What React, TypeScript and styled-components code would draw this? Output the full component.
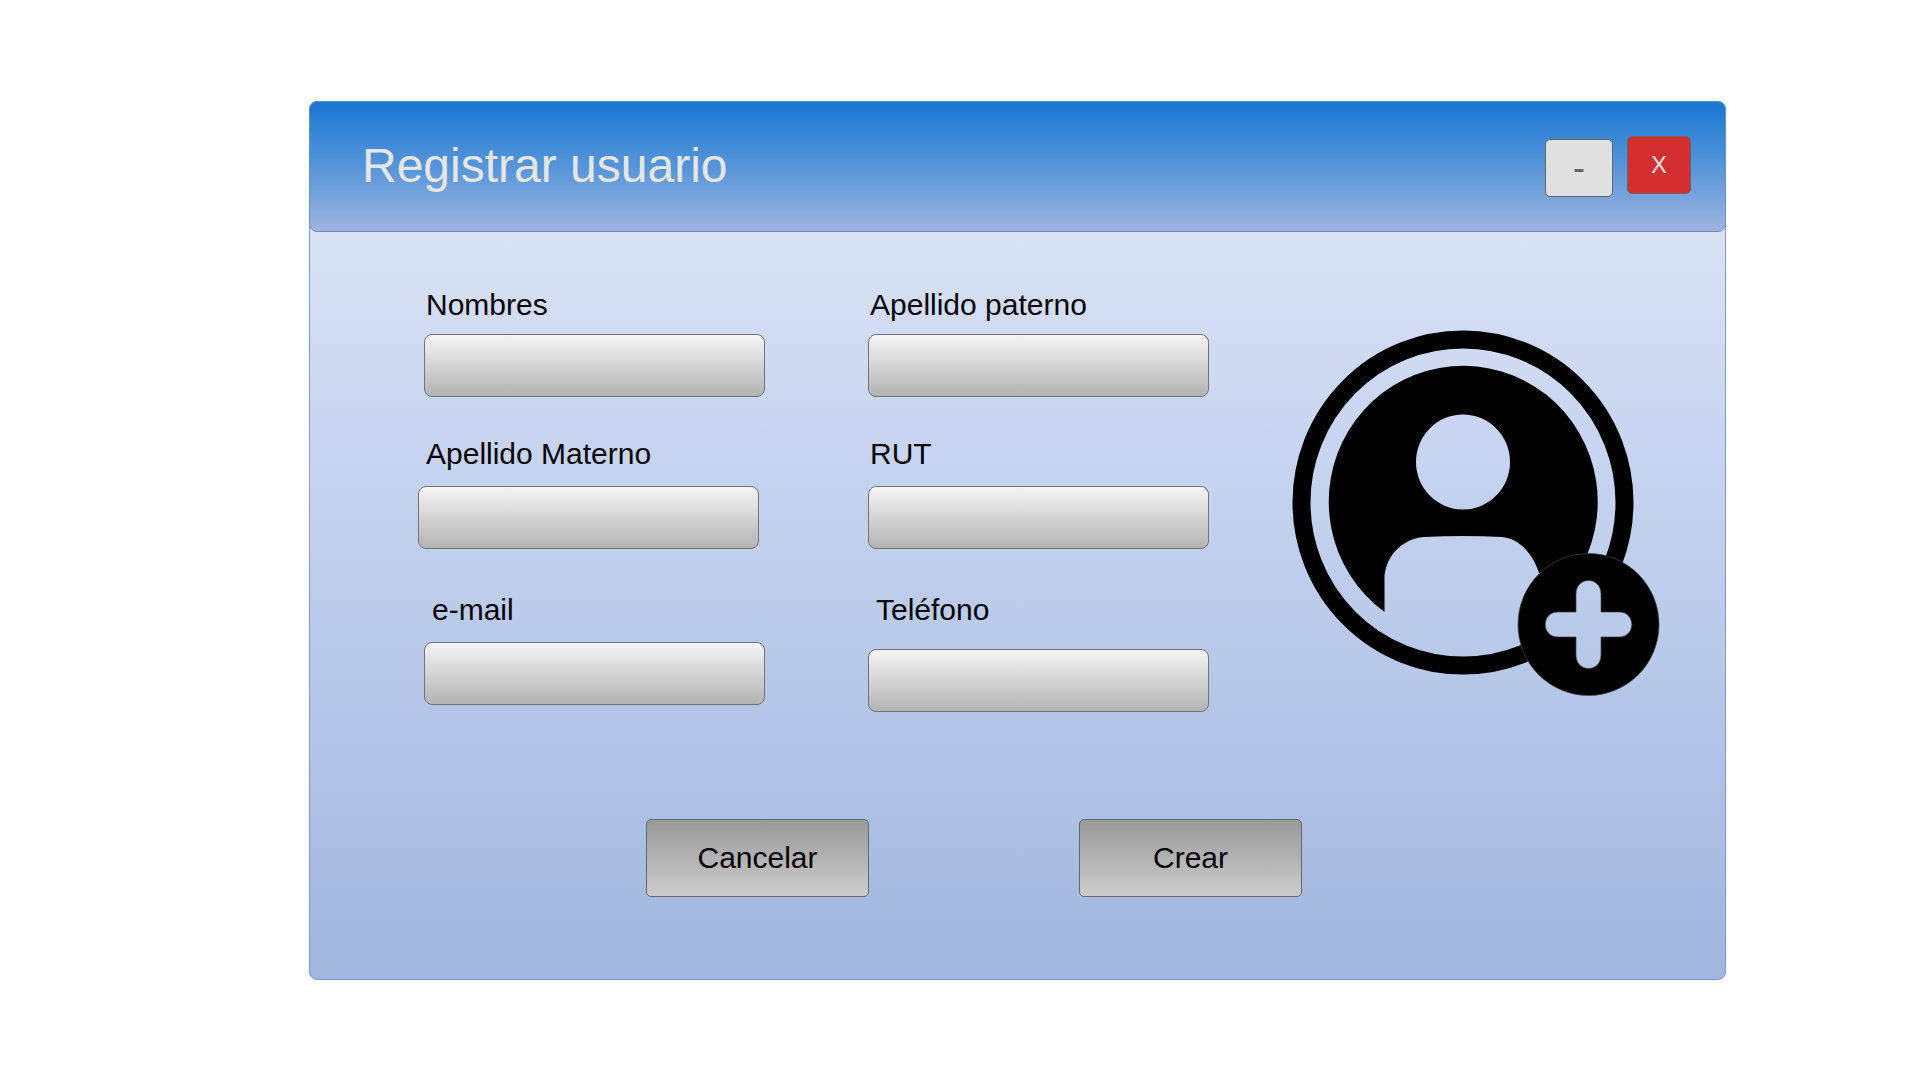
import React, { useId } from 'react';
import styled, { createGlobalStyle } from 'styled-components';

const GlobalStyle = createGlobalStyle`
  *, *::before, *::after { box-sizing: border-box; }
  body {
    margin: 0;
    background: #fff;
    font-family: 'Liberation Sans', Arial, Helvetica, sans-serif;
    color: #000;
  }
`;

const Page = styled.main`
  min-height: 100vh;
  padding: 101px 194px 100px 309px;
`;

const Dialog = styled.section`
  border: 1px solid #7f97c9;
  border-radius: 8px;
  background: linear-gradient(#dae3f5 0, #d9e3f5 131px, #d2dcf4 220px, #a0b6df 100%);
`;

const TitleBar = styled.header`
  display: flex;
  align-items: center;
  justify-content: space-between;
  margin: -1px;
  height: 131px;
  padding: 0 34px 0 52px;
  border: 1px solid #6c8ebf;
  border-radius: 8px;
  background: linear-gradient(#1976d2, #5695d9 50%, #a0b5e0);
`;

const Title = styled.h1`
  margin: 0;
  padding-bottom: 2px;
  font-size: 48px;
  line-height: 52px;
  font-weight: 400;
  color: #e6e6e6;
`;

const WindowControls = styled.div`
  display: flex;
  align-items: flex-start;
  gap: 14px;
`;

const WindowButton = styled.button<{ $tone: 'plain' | 'danger' }>`
  width: ${p => (p.$tone === 'danger' ? 64 : 68)}px;
  height: 58px;
  margin-top: ${p => (p.$tone === 'danger' ? 0 : 3)}px;
  padding: 0;
  border: 1px solid #666;
  border-radius: 5px;
  background: ${p => (p.$tone === 'danger' ? '#d32f2f' : '#e0e0e0')};
  color: ${p => (p.$tone === 'danger' ? '#e0e0e0' : '#666')};
  font-family: inherit;
  font-size: ${p => (p.$tone === 'danger' ? 24 : 36)}px;
  line-height: 1;
`;

const Form = styled.form`
  padding: 56px 65px 82px 108px;
`;

const Columns = styled.div`
  display: flex;
  align-items: flex-start;
  justify-content: space-between;
`;

const Fields = styled.div`
  display: grid;
  grid-template-columns: repeat(2, 347px);
  grid-template-rows: 149px 156px auto;
  column-gap: 97px;
`;

const Field = styled.div<{ $gap: number; $outdent?: boolean }>`
  display: flex;
  flex-direction: column;
  align-items: flex-start;
  gap: ${p => p.$gap}px;
  padding-left: ${p => (p.$outdent ? 0 : 6)}px;
`;

const Label = styled.label<{ $indent: number }>`
  padding-left: ${p => p.$indent}px;
  font-size: 30px;
  line-height: 36px;
`;

const TextBox = styled.input`
  width: 341px;
  height: 63px;
  padding: 0 14px;
  border: 1px solid #737373;
  border-radius: 8px;
  background: linear-gradient(#f5f5f5, #b3b3b3);
  font-family: inherit;
  font-size: 30px;
`;

const Illustration = styled.svg`
  display: block;
  width: 368px;
  height: 368px;
  margin-top: 43px;
`;

const Actions = styled.div`
  display: flex;
  gap: 210px;
  padding-left: 228px;
  margin-top: 107px;
`;

const ActionButton = styled.button`
  width: 223px;
  height: 78px;
  border: 1px solid #666;
  border-radius: 5px;
  background: linear-gradient(#999, #ccc);
  color: #000;
  font-family: inherit;
  font-size: 30px;
`;

type FieldSpec = {
  label: string;
  type?: string;
  gap: number;
  indent: number;
  outdent?: boolean;
};

const FIELDS: FieldSpec[] = [
  { label: 'Nombres', gap: 11, indent: 2 },
  { label: 'Apellido paterno', gap: 11, indent: 2 },
  { label: 'Apellido Materno', gap: 14, indent: 8, outdent: true },
  { label: 'RUT', gap: 14, indent: 2 },
  { label: 'e-mail', type: 'email', gap: 14, indent: 8 },
  { label: 'Teléfono', type: 'tel', gap: 21, indent: 8 },
];

function FormField({ label, type = 'text', gap, indent, outdent }: FieldSpec) {
  const id = useId();
  return (
    <Field $gap={gap} $outdent={outdent}>
      <Label htmlFor={id} $indent={indent}>{label}</Label>
      <TextBox id={id} type={type} />
    </Field>
  );
}

function AddUserIcon() {
  return (
    <Illustration viewBox="0 0 368 368" aria-hidden="true">
      <mask id="badge-cutout" maskUnits="userSpaceOnUse" x="0" y="0" width="368" height="368">
        <rect width="368" height="368" fill="#fff" />
        <circle cx="296.5" cy="294.5" r="70" fill="#000" />
      </mask>
      <g mask="url(#badge-cutout)">
        <ellipse cx="171" cy="172.5" rx="161.5" ry="163" fill="none" stroke="#000" strokeWidth="18" />
        <path
          fillRule="evenodd"
          d="M92.500 282 A134.500 136 0 1 1 295 225 Q300 250 247 243 C241 223 226 208 210 207 Q171 205 132 207 C108 209 92 229 92.500 250 Z
             M171 84.500 A47 47.500 0 1 0 171 179.500 A47 47.500 0 1 0 171 84.500 Z"
        />
      </g>
      <path
        fillRule="evenodd"
        stroke="#444"
        strokeWidth="0.7"
        d="M296.500 223.500 A70.500 71 0 1 1 296.500 365.500 A70.500 71 0 1 1 296.500 223.500 Z
           M284 282 H266 C249 282 249 307 266 307 H284 V325 C284 343 309 343 309 325 V307 H327 C344 307 344 282 327 282 H309 V264 C309 246 284 246 284 264 Z"
      />
    </Illustration>
  );
}

export default function App() {
  return (
    <>
      <GlobalStyle />
      <Page>
        <Dialog aria-labelledby="dialog-title">
          <TitleBar>
            <Title id="dialog-title">Registrar usuario</Title>
            <WindowControls>
              <WindowButton type="button" $tone="plain" aria-label="Minimizar">-</WindowButton>
              <WindowButton type="button" $tone="danger" aria-label="Cerrar">X</WindowButton>
            </WindowControls>
          </TitleBar>
          <Form onSubmit={e => e.preventDefault()}>
            <Columns>
              <Fields>
                {FIELDS.map(f => <FormField key={f.label} {...f} />)}
              </Fields>
              <AddUserIcon />
            </Columns>
            <Actions>
              <ActionButton type="button">Cancelar</ActionButton>
              <ActionButton type="submit">Crear</ActionButton>
            </Actions>
          </Form>
        </Dialog>
      </Page>
    </>
  );
}
